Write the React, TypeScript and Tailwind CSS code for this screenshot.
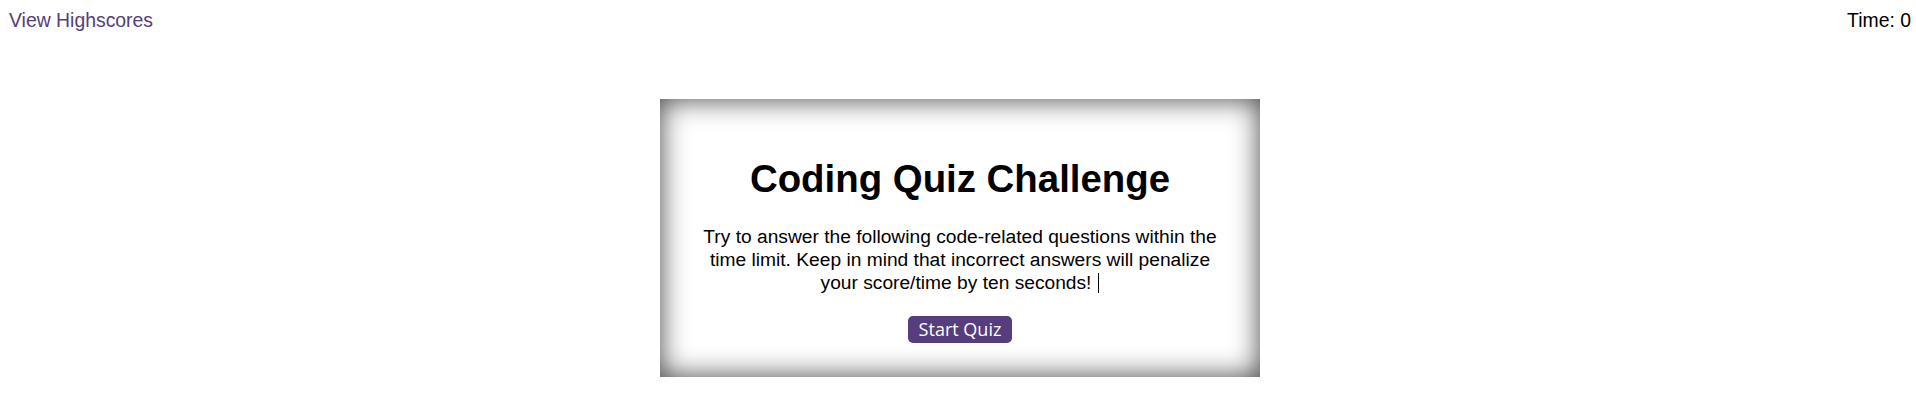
const App = () => {
  return (
    <div className="min-h-screen bg-white font-['Liberation_Sans',Arial,sans-serif] text-black">
      {/* Header */}
      <header className="flex justify-between pl-[9px] pr-[5px] pt-[9px] text-[19.4px] leading-[22px]">
        <a href="#" className="text-[#563d7c]">
          View Highscores
        </a>
        <span>Time: 0</span>
      </header>

      {/* Intro card */}
      <main className="flex justify-center pl-1 mt-[68px]">
        <section className="w-[600px] h-[278px] flex flex-col items-center text-center px-10 pt-[58px] shadow-[inset_0_0_28px_rgba(0,0,0,0.75)]">
          <h1 className="text-[38.4px] leading-[44px] font-bold">
            Coding Quiz Challenge
          </h1>
          <p className="mt-[24px] text-[19.2px] leading-[23px]">
            Try to answer the following code-related questions within the time
            limit. Keep in mind that incorrect answers will penalize your
            score/time by ten seconds!
            <span className="inline-block align-[-4px] ml-[7px] w-px h-[20px] bg-black"></span>
          </p>
          <button className="mt-[22px] h-[27px] px-[11px] rounded-[5px] bg-[#563d7c] text-white font-['Open_Sans',sans-serif] text-[18px] leading-[27px]">
            Start Quiz
          </button>
        </section>
      </main>
    </div>
  );
};

export default App;
